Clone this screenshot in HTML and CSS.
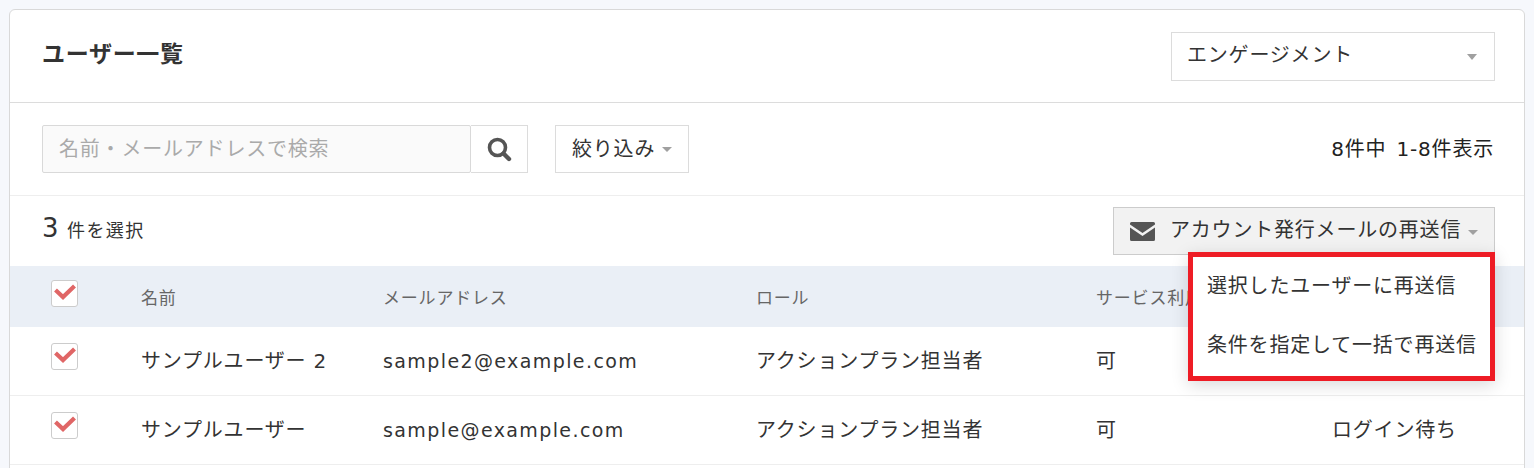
FILE: index.html
```html
<!DOCTYPE html>
<html lang="ja">
<head>
    <meta charset="UTF-8">
    <title>ユーザー一覧</title>
    <link rel="stylesheet" href="styles.css">
</head>
<body>
    <div class="card">
        <div class="card-head">
            <h1 class="title">ユーザー一覧</h1>
            <div class="select">
                <span class="select-label">エンゲージメント</span>
                <span class="caret"></span>
            </div>
        </div>
        <div class="toolbar">
            <div class="search-input">名前・メールアドレスで検索</div>
            <div class="search-btn">
                <svg width="26" height="26" viewBox="0 0 26 26"><circle cx="11.5" cy="11.5" r="8" fill="none" stroke="#555" stroke-width="3.6"/><path d="M17.5 17.5L23 23" stroke="#555" stroke-width="4.4" stroke-linecap="round"/></svg>
            </div>
            <div class="filter-btn">絞り込み<span class="caret small"></span></div>
            <div class="count">8件中 1-8件表示</div>
        </div>
        <div class="selection">
            <div class="selected"><span class="selected-num">3</span> 件を選択</div>
            <div class="resend">
                <div class="resend-btn">
                    <svg width="25" height="19" viewBox="0 0 25 19"><path d="M1.5 0H23.5A1.5 1.5 0 0 1 25 1.5V2.5L12.5 11L0 2.5V1.5A1.5 1.5 0 0 1 1.5 0Z" fill="#555"/><path d="M0 5.5L12.5 14L25 5.5V17.5A1.5 1.5 0 0 1 23.5 19H1.5A1.5 1.5 0 0 1 0 17.5Z" fill="#555"/></svg>
                    <span class="resend-label">アカウント発行メールの再送信</span>
                    <span class="caret small"></span>
                </div>
                <div class="menu">
                    <div class="menu-item">選択したユーザーに再送信</div>
                    <div class="menu-item">条件を指定して一括で再送信</div>
                </div>
            </div>
        </div>
        <table class="users">
            <thead>
                <tr>
                    <th class="col-check"><span class="check"><svg width="25" height="25" viewBox="0 0 25 25"><path d="M3.5 9L11 16L22.5 5" fill="none" stroke="#e06666" stroke-width="4.2"/></svg></span></th>
                    <th class="col-name">名前</th>
                    <th class="col-mail">メールアドレス</th>
                    <th class="col-role">ロール</th>
                    <th class="col-service">サービス利用</th>
                    <th>ステータス</th>
                </tr>
            </thead>
            <tbody>
                <tr>
                    <td><span class="check"><svg width="25" height="25" viewBox="0 0 25 25"><path d="M3.5 9L11 16L22.5 5" fill="none" stroke="#e06666" stroke-width="4.2"/></svg></span></td>
                    <td>サンプルユーザー 2</td>
                    <td class="mail">sample2@example.com</td>
                    <td>アクションプラン担当者</td>
                    <td>可</td>
                    <td>ログイン待ち</td>
                </tr>
                <tr>
                    <td><span class="check"><svg width="25" height="25" viewBox="0 0 25 25"><path d="M3.5 9L11 16L22.5 5" fill="none" stroke="#e06666" stroke-width="4.2"/></svg></span></td>
                    <td>サンプルユーザー</td>
                    <td class="mail">sample@example.com</td>
                    <td>アクションプラン担当者</td>
                    <td>可</td>
                    <td>ログイン待ち</td>
                </tr>
            </tbody>
        </table>
    </div>
</body>
</html>
```

FILE: styles.css
```css
html, body {
    height: 468px;
    overflow: hidden;
}
body {
    margin: 0;
    padding: 9px 9px 0;
    background: #f6f8fc;
    color: #333;
    font-family: "DejaVu Sans", "Noto Sans CJK JP", sans-serif;
    font-size: 20px;
    line-height: 26px;
    letter-spacing: 0.8px;
    box-sizing: border-box;
}
.card {
    min-height: 480px;
    background: #fff;
    border: 1px solid #d9d9d9;
    border-radius: 6px 6px 0 0;
}
.card-head {
    display: flex;
    justify-content: space-between;
    align-items: center;
    height: 92px;
    padding: 0 29px 0 32px;
    border-bottom: 1px solid #dcdcdc;
}
.title {
    margin: 0 0 3px;
    font-size: 23px;
    line-height: 1;
    font-weight: 700;
    letter-spacing: 0.7px;
}
.select {
    display: flex;
    justify-content: space-between;
    align-items: center;
    width: 324px;
    height: 49px;
    padding: 0 17px 0 15px;
    border: 1px solid #dcdcdc;
    box-sizing: border-box;
}
.select-label {
    margin-bottom: 3px;
}
.caret {
    width: 0;
    height: 0;
    border-left: 5px solid transparent;
    border-right: 5px solid transparent;
    border-top: 6px solid #a0a0a0;
    display: inline-block;
}
.select .caret {
    margin-top: 2px;
}
.caret.small {
    border-top-width: 5px;
}
.toolbar {
    display: flex;
    align-items: center;
    height: 92px;
    padding: 0 30px 0 32px;
    border-bottom: 1px solid #eee;
}
.search-input {
    display: flex;
    align-items: center;
    width: 429px;
    height: 48px;
    padding-left: 16px;
    background: #fafafa;
    border: 1px solid #d9d9d9;
    border-radius: 2px;
    color: #aaa;
    box-sizing: border-box;
}
.search-btn {
    display: flex;
    justify-content: center;
    align-items: center;
    width: 57px;
    height: 48px;
    border: 1px solid #dcdcdc;
    border-left: 0;
    box-sizing: border-box;
}
.filter-btn {
    display: flex;
    align-items: center;
    gap: 7px;
    height: 48px;
    margin-left: 27px;
    padding: 0 16px;
    border: 1px solid #dcdcdc;
    box-sizing: border-box;
}
.count {
    margin-left: auto;
    word-spacing: 3px;
    color: #222;
}
.selection {
    display: flex;
    justify-content: space-between;
    align-items: center;
    height: 70px;
    padding: 0 29px 0 32px;
}
.selected {
    margin-bottom: 4px;
    font-size: 18px;
    letter-spacing: 1.4px;
}
.selected-num {
    font-size: 26px;
    line-height: 1;
}
.resend {
    position: relative;
}
.resend-btn {
    display: flex;
    align-items: center;
    width: 382px;
    height: 48px;
    padding-left: 16px;
    background: #f2f2f2;
    border: 1px solid #ccc;
    box-sizing: border-box;
}
.resend-label {
    margin: 0 0 3px 15px;
}
.resend-btn .caret {
    margin-left: 7px;
    margin-top: 2px;
}
.menu {
    position: absolute;
    top: 45px;
    right: 0;
    z-index: 10;
    width: 307px;
    height: 129px;
    padding: 5px 0 0 14px;
    background: #fff;
    border: 5px solid #ee1c25;
    box-shadow: 0 4px 16px rgba(0, 0, 0, 0.15);
    box-sizing: border-box;
}
.menu-item {
    height: 59px;
    line-height: 48px;
}
.users {
    width: 100%;
    border-collapse: collapse;
    table-layout: fixed;
}
.users th {
    height: 59px;
    padding: 2px 0 0;
    background: #eaeff6;
    color: #666;
    font-size: 17px;
    font-weight: 400;
    letter-spacing: 0.8px;
    text-align: left;
}
.users td {
    height: 68px;
    padding: 0;
    border-bottom: 1px solid #eee;
}
.users .mail {
    font-size: 19px;
    letter-spacing: 1.4px;
}
.col-check { width: 131px; }
.col-name { width: 242px; }
.col-mail { width: 373px; }
.col-role { width: 340px; }
.col-service { width: 236px; }
.check {
    display: flex;
    justify-content: center;
    align-items: center;
    width: 27px;
    height: 27px;
    margin-left: 41px;
    margin-top: -9px;
    background: #fff;
    border: 1px solid #ccc;
    border-radius: 3px;
    box-sizing: border-box;
}
```
